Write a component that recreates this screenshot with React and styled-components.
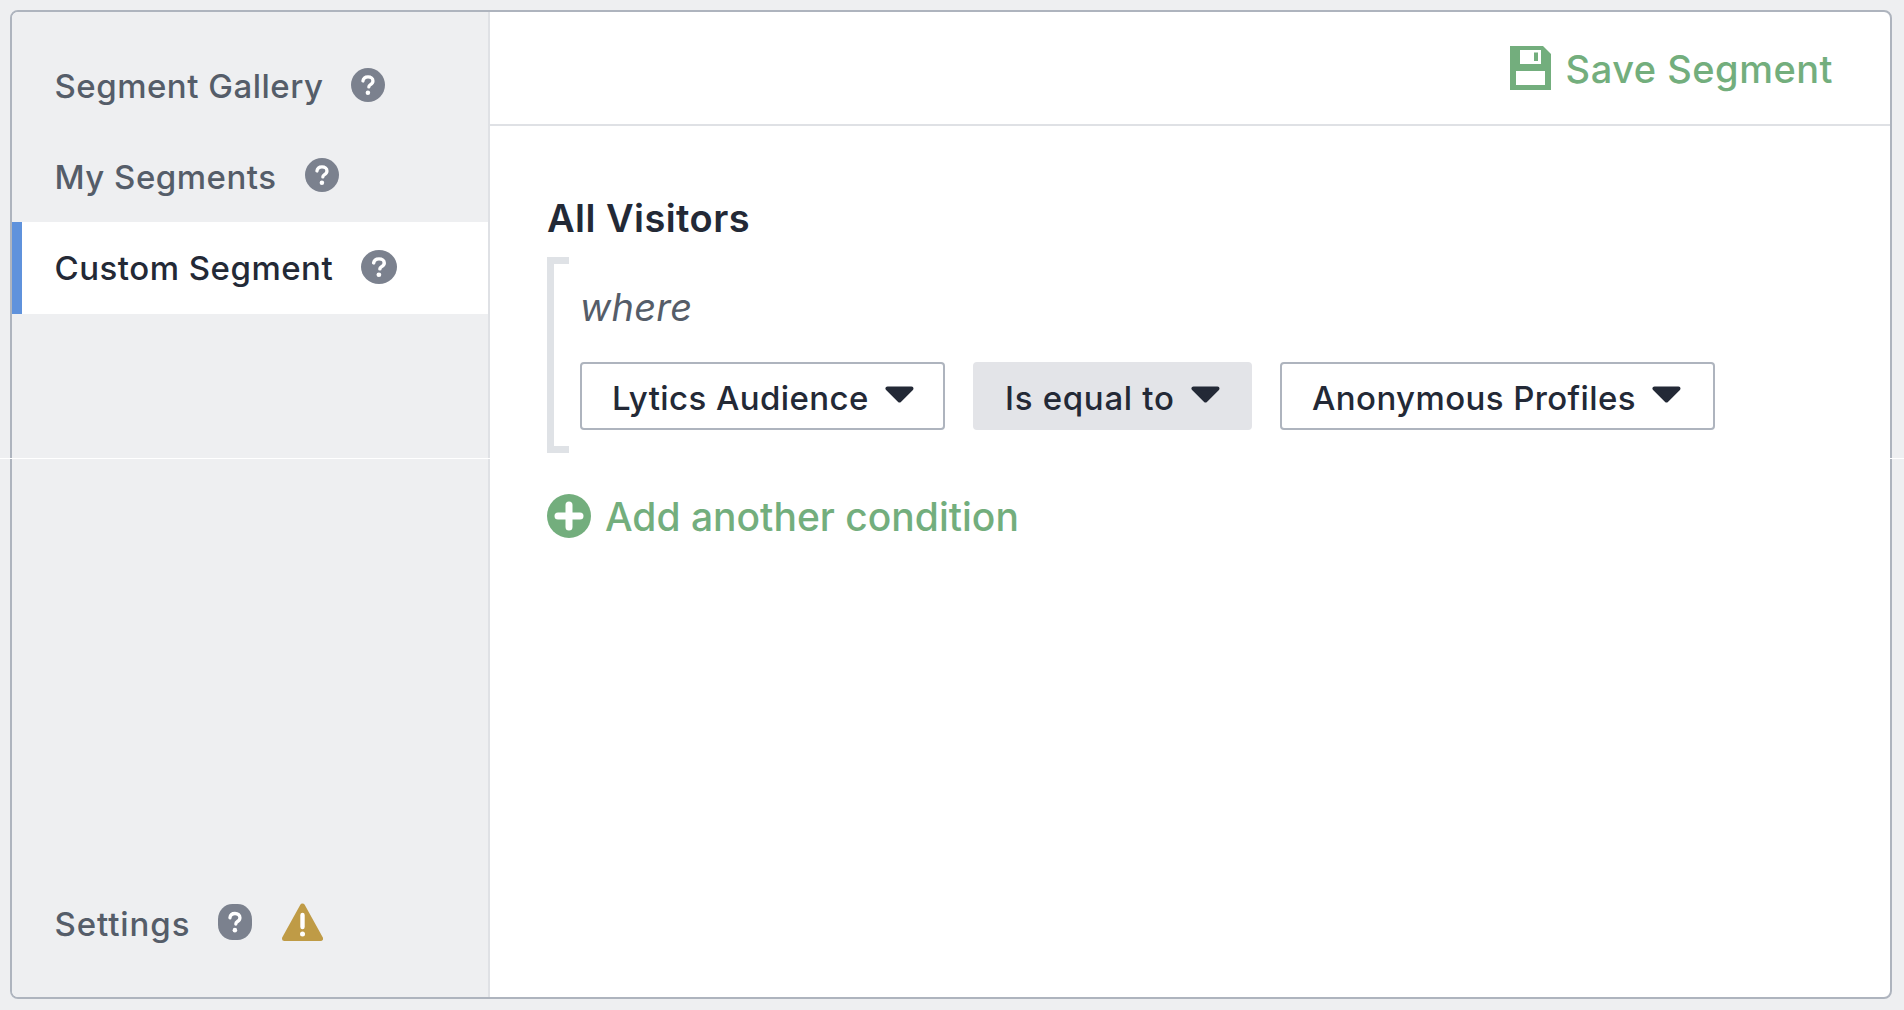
import React from "react";
import styled, { createGlobalStyle } from "styled-components";

const Global = createGlobalStyle`
  html, body { margin: 0; padding: 0; height: 100%; background: #eeeff1; }
  body { font-family: Inter, "Liberation Sans", sans-serif; -webkit-font-smoothing: antialiased; }
  #root { height: 100%; }
`;

const Page = styled.div`
  position: relative;
  box-sizing: border-box;
  width: 1904px;
  height: 1010px;
  padding: 10px 12px 11px 10px;
  overflow: hidden;
`;
const Frame = styled.div`
  box-sizing: border-box;
  height: 100%;
  display: flex;
  border: 2px solid #aeb4be;
  border-radius: 8px;
  background: #fff;
  overflow: hidden;
`;
const SeamLine = styled.div`
  position: absolute;
  left: 0;
  right: 0;
  top: 458px;
  height: 1px;
  background: #fff;
`;
const Sidebar = styled.nav`
  box-sizing: border-box;
  flex: 0 0 478px;
  display: flex;
  flex-direction: column;
  padding-top: 29px;
  background: #eeeff1;
  border-right: 2px solid #dfe1e5;
`;
const NavItem = styled.div`
  box-sizing: border-box;
  height: ${(p) => (p.$active ? 92 : 90.5)}px;
  display: flex;
  align-items: center;
  padding-left: ${(p) => (p.$active ? 32.5 : 42.5)}px;
  font-size: 33px;
  letter-spacing: 0.5px;
  font-weight: 500;
  color: ${(p) => (p.$active ? "#232936" : "#555d69")};
  background: ${(p) => (p.$active ? "#fff" : "transparent")};
  border-left: ${(p) => (p.$active ? "10px solid #5f92dc" : "0 solid transparent")};
`;
const SettingsItem = styled(NavItem)`
  margin-top: auto;
  margin-bottom: 28px;
  letter-spacing: 0.9px;
`;
const HelpSlot = styled.span`
  display: inline-flex;
  margin-left: 28px;
  margin-top: -3px;
`;
const WarnSlot = styled.span`
  display: inline-flex;
  margin-left: 30px;
  margin-top: -3px;
`;
const Main = styled.main`
  flex: 1;
  min-width: 0;
  display: flex;
  flex-direction: column;
`;
const Header = styled.header`
  box-sizing: border-box;
  flex: 0 0 114px;
  display: flex;
  justify-content: flex-end;
  align-items: center;
  gap: 15px;
  padding: 0 57px 0 0;
  border-bottom: 2px solid #dfe1e5;
`;
const GreenLabel = styled.span`
  font-size: 39px;
  font-weight: 500;
  color: #73ae7d;
  white-space: nowrap;
`;
const SaveLabel = styled(GreenLabel)`
  font-size: 38px;
  letter-spacing: 0.5px;
  margin-top: 2px;
`;
const Body = styled.section`
  padding: 67px 0 0 57px;
`;
const Title = styled.h2`
  margin: 0;
  font-size: 38px;
  letter-spacing: 0.45px;
  font-weight: 600;
  line-height: 50px;
  color: #232936;
`;
const Bracket = styled.div`
  box-sizing: border-box;
  position: relative;
  height: 196px;
  margin-top: 14px;
  padding: 25px 0 0 33px;
`;
const BracketMark = styled.span`
  position: absolute;
  left: 0;
  top: 0;
  bottom: 0;
  width: 22px;
  box-sizing: border-box;
  border: 7px solid #dfe2e6;
  border-right: 0;
`;
const Where = styled.div`
  font-size: 38px;
  letter-spacing: 0.3px;
  font-style: italic;
  line-height: 50px;
  color: #555d69;
`;
const Conditions = styled.div`
  display: flex;
  gap: 28px;
  margin-top: 30px;
`;
const Select = styled.div`
  box-sizing: border-box;
  height: 68px;
  display: flex;
  align-items: center;
  gap: 16px;
  width: ${(p) => p.$width}px;
  padding: 3px 0 0 30px;
  font-size: 33px;
  letter-spacing: ${(p) => (p.$filled ? 0.7 : 0.4)}px;
  font-weight: 500;
  color: #232936;
  white-space: nowrap;
  border-radius: 4px;
  border: 2px solid ${(p) => (p.$filled ? "#e3e4e8" : "#aeb4be")};
  background: ${(p) => (p.$filled ? "#e3e4e8" : "#fff")};
`;
const CaretSlot = styled.span`
  display: inline-flex;
  margin-top: -6px;
`;
const AddRow = styled.div`
  display: flex;
  align-items: center;
  gap: 14px;
  margin-top: 39.5px;
`;

const HelpIcon = ({ square, width = 34 }) => (
  <svg width={width} height={square ? 36 : 34} viewBox="0 0 33 33" preserveAspectRatio="none">
    {square ? <rect width="33" height="33" rx="14" fill="#7b818e" /> : <circle cx="16.5" cy="16.5" r="16.5" fill="#7b818e" />}
    <path d="M11.6 12.6c.3-2.5 2.2-4 4.9-4 2.8 0 4.8 1.6 4.8 3.9 0 1.9-1.1 2.8-2.4 3.6-1.1.7-1.6 1.2-1.6 2.3" fill="none" stroke="#fff" strokeWidth="3.2" strokeLinecap="round" />
    <circle cx="16.4" cy="24" r="2.2" fill="#fff" />
  </svg>
);

const WarnIcon = () => (
  <svg width="41" height="39" viewBox="0 0 41 39">
    <path d="M20.5 3 L38.5 35.5 H2.5 Z" fill="#bf9b46" stroke="#bf9b46" strokeWidth="5" strokeLinejoin="round" />
    <path d="M20.5 12 V24" stroke="#fff" strokeWidth="4.4" strokeLinecap="round" />
    <circle cx="20.5" cy="31" r="2.5" fill="#fff" />
  </svg>
);

const SaveIcon = () => (
  <svg width="41" height="44" viewBox="0 0 41 44">
    <path
      fillRule="evenodd"
      fill="#73ae7d"
      d="M0 0H33L41 8V44H0ZM10 4V18H31V4ZM6 25V39H35V25Z"
    />
    <path d="M24 6.5H28V15H24Z" fill="#73ae7d" />
  </svg>
);

const PlusIcon = () => (
  <svg width="44" height="44" viewBox="0 0 44 44">
    <circle cx="22" cy="22" r="22" fill="#73ae7d" />
    <path d="M22 11V33M11 22H33" stroke="#fff" strokeWidth="7" strokeLinecap="round" />
  </svg>
);

const Caret = () => (
  <CaretSlot>
    <svg width="29" height="17" viewBox="0 0 29 17">
      <path d="M2.5 2.5H26.5L14.5 14.5Z" fill="#232936" stroke="#232936" strokeWidth="4" strokeLinejoin="round" />
    </svg>
  </CaretSlot>
);

export default function App() {
  return (
    <>
      <Global />
      <Page>
        <Frame>
          <Sidebar>
            <NavItem>Segment Gallery<HelpSlot><HelpIcon /></HelpSlot></NavItem>
            <NavItem>My Segments<HelpSlot><HelpIcon /></HelpSlot></NavItem>
            <NavItem $active>Custom Segment<HelpSlot><HelpIcon width={36} /></HelpSlot></NavItem>
            <SettingsItem>
              Settings
              <HelpSlot><HelpIcon square /></HelpSlot>
              <WarnSlot><WarnIcon /></WarnSlot>
            </SettingsItem>
          </Sidebar>
          <Main>
            <Header>
              <SaveIcon />
              <SaveLabel>Save Segment</SaveLabel>
            </Header>
            <Body>
              <Title>All Visitors</Title>
              <Bracket>
                <BracketMark />
                <Where>where</Where>
                <Conditions>
                  <Select $width={365}>Lytics Audience<Caret /></Select>
                  <Select $width={279} $filled>Is equal to<Caret /></Select>
                  <Select $width={435}>Anonymous Profiles<Caret /></Select>
                </Conditions>
              </Bracket>
              <AddRow>
                <PlusIcon />
                <GreenLabel>Add another condition</GreenLabel>
              </AddRow>
            </Body>
          </Main>
        </Frame>
        <SeamLine />
      </Page>
    </>
  );
}
